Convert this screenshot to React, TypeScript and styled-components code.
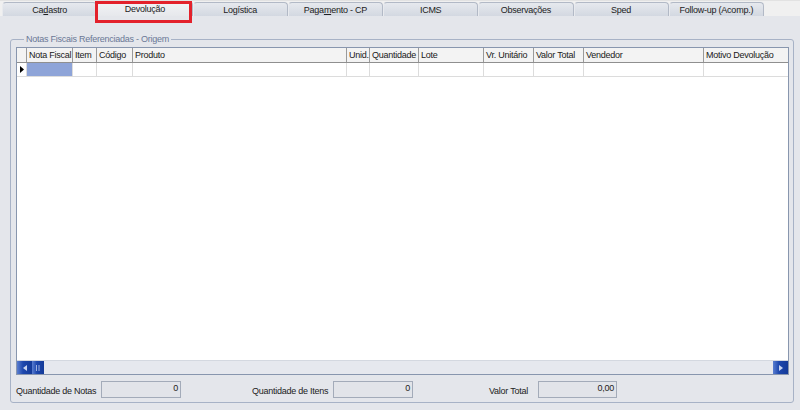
import React from 'react';
import styled, { createGlobalStyle } from 'styled-components';

const GlobalStyle = createGlobalStyle`
  html, body {
    margin: 0;
    padding: 0;
    background: #e4e6eb;
    font-family: "Liberation Sans", Arial, sans-serif;
    font-size: 9px;
    letter-spacing: -0.25px;
    color: #1c1c1c;
  }
`;

const Page = styled.div`
  position: relative;
  width: 800px;
  height: 410px;
  overflow: hidden;
  background: #e4e6eb;
  display: flex;
  flex-direction: column;
`;

const ToolStrip = styled.div`
  height: 5px;
  background: #f3f3f3;
  display: flex;
  align-items: flex-end;
  gap: 14px;
  padding-left: 2px;
  overflow: hidden;
  border-bottom: 1px solid #e2e2e2;
`;

const ToolIcon = styled.div<{ $w: number; $color: string; $round?: boolean; $ml?: number }>`
  width: ${(p) => p.$w}px;
  height: 4px;
  margin-left: ${(p) => p.$ml ?? 0}px;
  flex-shrink: 0;
  background: ${(p) => p.$color};
  border-radius: ${(p) => (p.$round ? '0 0 50% 50%' : '0 0 2px 2px')};
`;

const ToolButton = styled.div`
  width: 16px;
  height: 4px;
  flex-shrink: 0;
  box-sizing: border-box;
  border: 1px solid #b4b4b4;
  border-top: none;
  border-radius: 0 0 4px 4px;
  background: #f8f8f8;
`;

const TabBar = styled.div`
  height: 15px;
  display: flex;
  align-items: flex-end;
  padding-left: 2px;
  background: #f0f0f0;
`;

const Tab = styled.div<{ $active?: boolean }>`
  width: 95.25px;
  height: ${(p) => (p.$active ? 15 : 14)}px;
  box-sizing: border-box;
  display: flex;
  align-items: center;
  justify-content: center;
  border: 1px solid #b2b9c6;
  border-bottom: none;
  border-left-color: ${(p) => (p.$active ? '#b2b9c6' : '#e8eaee')};
  border-radius: 4px 4px 0 0;
  background: ${(p) =>
    p.$active
      ? 'linear-gradient(#f2f3f6, #e6e8ec)'
      : 'linear-gradient(#e6e9ee, #d3d8e1)'};
  color: #222;
  font-size: 9px;
  line-height: 1;
  padding-top: 1px;
  white-space: nowrap;

  u {
    text-decoration: underline;
  }
`;

const Highlight = styled.div`
  position: absolute;
  left: 95px;
  top: 1px;
  width: 97px;
  height: 22px;
  box-sizing: border-box;
  border: 3px solid #e3212b;
  pointer-events: none;
`;

const Body = styled.div`
  flex: 1;
  padding: 18px 6px 7px 10px;
  display: flex;
`;

const Group = styled.fieldset`
  flex: 1;
  margin: 0;
  padding: 2px 4px 4px 5px;
  border: 1px solid #a7b2c6;
  border-radius: 3px;
  display: flex;
  flex-direction: column;
  min-width: 0;
`;

const Legend = styled.legend`
  padding: 0 2px;
  margin-left: 8px;
  color: #6a7896;
  font-size: 9px;
  line-height: 11px;
`;

const Grid = styled.div`
  height: 328px;
  box-sizing: border-box;
  border: 1px solid #8896ae;
  background: #fff;
  display: flex;
  flex-direction: column;
`;

const COLUMNS = '10px 46px 24px 36px 214px 23px 49px 65px 50px 50px 120px 1fr';

const HeaderRow = styled.div`
  display: grid;
  grid-template-columns: ${COLUMNS};
  height: 14px;
  background: #f3f3f3;
  border-bottom: 1px solid #8f8f8f;
`;

const HeaderCell = styled.div`
  border-right: 1px solid #9a9a9a;
  padding-left: 2px;
  font-size: 9px;
  line-height: 14px;
  white-space: nowrap;
  overflow: hidden;
  color: #202020;

  &:last-child {
    border-right: none;
  }
`;

const DataRow = styled.div`
  display: grid;
  grid-template-columns: ${COLUMNS};
  height: 13px;
  border-bottom: 1px solid #dcdcdc;
`;

const DataCell = styled.div<{ $selected?: boolean }>`
  border-right: 1px solid #dcdcdc;
  background: ${(p) => (p.$selected ? '#8ea4d8' : 'transparent')};

  &:last-child {
    border-right: none;
  }
`;

const Indicator = styled.div`
  border-right: 1px solid #dcdcdc;
  display: flex;
  align-items: center;
  justify-content: center;
`;

const GridSpace = styled.div`
  flex: 1;
`;

const ScrollBar = styled.div`
  height: 13px;
  display: flex;
  background: #e6e8ee;
  border-top: 1px solid #d4d8e0;
`;

const ScrollButton = styled.div<{ $w: number }>`
  width: ${(p) => p.$w}px;
  height: 100%;
  background: linear-gradient(90deg, #5a7ed0, #1d47ad 40%, #143a98);
  display: flex;
  align-items: center;
  justify-content: center;
  flex-shrink: 0;
`;

const ScrollTrack = styled.div`
  flex: 1;
`;

const Footer = styled.div`
  margin-top: 6px;
  display: grid;
  grid-template-columns: 236px 237px 1fr;
  align-items: center;
`;

const Field = styled.div<{ $labelWidth: number; $inputWidth: number }>`
  display: grid;
  grid-template-columns: ${(p) => p.$labelWidth}px ${(p) => p.$inputWidth}px;
  align-items: center;
`;

const Label = styled.span`
  font-size: 9px;
  color: #222;
  padding-top: 2px;
  white-space: nowrap;
`;

const ValueBox = styled.div`
  height: 17px;
  box-sizing: border-box;
  border: 1px solid #a3abb9;
  background: #e2e4e9;
  text-align: right;
  padding: 1px 2px 0 0;
  font-size: 9px;
  line-height: 10px;
  color: #222;
`;

const tabs: { label: React.ReactNode; active?: boolean }[] = [
  { label: <>Ca<u>d</u>astro</> },
  { label: 'Devolução', active: true },
  { label: 'Logística' },
  { label: <>Paga<u>m</u>ento - CP</> },
  { label: 'ICMS' },
  { label: 'Observações' },
  { label: 'Sped' },
  { label: 'Follow-up (Acomp.)' },
];

const headers = [
  '',
  'Nota Fiscal',
  'Item',
  'Código',
  'Produto',
  'Unid.',
  'Quantidade',
  'Lote',
  'Vr. Unitário',
  'Valor Total',
  'Vendedor',
  'Motivo Devolução',
];

const App: React.FC = () => {
  return (
    <Page>
      <GlobalStyle />
      <ToolStrip>
        <ToolIcon $w={12} $color="#9a9a9a" />
        <ToolIcon $w={10} $color="#e2e2e2" $ml={34} />
        <ToolIcon $w={10} $color="#4a62c8" $ml={86} />
        <ToolIcon $w={10} $color="#d22020" $round $ml={30} />
        <ToolIcon $w={3} $color="#888" $ml={42} />
        <ToolButton style={{ marginLeft: 150 }} />
        <ToolButton />
        <ToolButton />
        <ToolButton />
        <ToolIcon $w={5} $color="#222" $ml={6} />
      </ToolStrip>

      <TabBar>
        {tabs.map((t, i) => (
          <Tab key={i} $active={t.active}>
            {t.label}
          </Tab>
        ))}
      </TabBar>

      <Body>
        <Group>
          <Legend>Notas Fiscais Referenciadas - Origem</Legend>
          <Grid>
            <HeaderRow>
              {headers.map((h, i) => (
                <HeaderCell key={i}>{h}</HeaderCell>
              ))}
            </HeaderRow>
            <DataRow>
              <Indicator>
                <svg width="4" height="7" viewBox="0 0 4 7">
                  <path d="M0 0 L4 3.5 L0 7 Z" fill="#000" />
                </svg>
              </Indicator>
              {headers.slice(1).map((_, i) => (
                <DataCell key={i} $selected={i === 0} />
              ))}
            </DataRow>
            <GridSpace />
            <ScrollBar>
              <ScrollButton $w={15}>
                <svg width="4" height="6" viewBox="0 0 4 6">
                  <path d="M4 0 L0 3 L4 6 Z" fill="#c8d4f0" />
                </svg>
              </ScrollButton>
              <ScrollButton $w={12}>
                <svg width="4" height="6" viewBox="0 0 4 6">
                  <path d="M0.5 0 V6 M3 0 V6" stroke="#9fb2e0" strokeWidth="1" />
                </svg>
              </ScrollButton>
              <ScrollTrack />
              <ScrollButton $w={15}>
                <svg width="4" height="6" viewBox="0 0 4 6">
                  <path d="M0 0 L4 3 L0 6 Z" fill="#c8d4f0" />
                </svg>
              </ScrollButton>
            </ScrollBar>
          </Grid>

          <Footer>
            <Field $labelWidth={85} $inputWidth={80}>
              <Label>Quantidade de Notas</Label>
              <ValueBox>0</ValueBox>
            </Field>
            <Field $labelWidth={81} $inputWidth={80}>
              <Label>Quantidade de Itens</Label>
              <ValueBox>0</ValueBox>
            </Field>
            <Field $labelWidth={49} $inputWidth={79}>
              <Label>Valor Total</Label>
              <ValueBox>0,00</ValueBox>
            </Field>
          </Footer>
        </Group>
      </Body>

      <Highlight />
    </Page>
  );
};

export default App;
